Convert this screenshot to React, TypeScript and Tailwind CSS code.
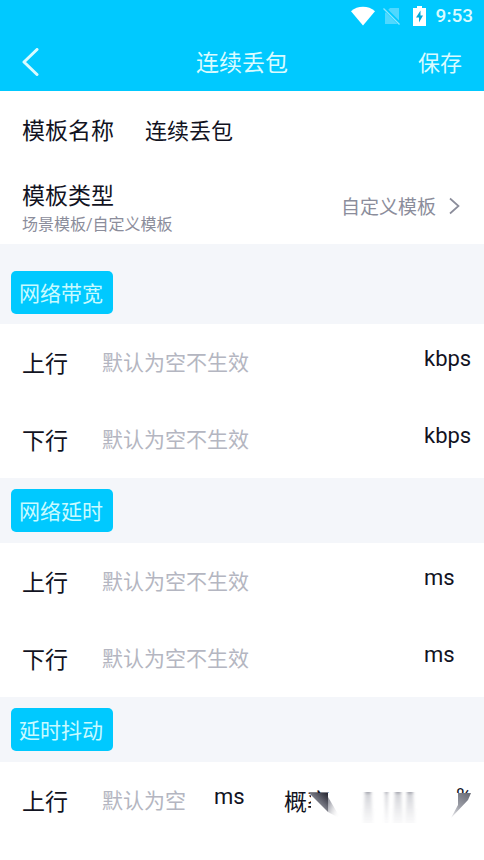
import { useState } from 'react';

interface SectionProps {
  title: string;
  first?: boolean;
  children: React.ReactNode;
}

export default function App() {
  const [name, setName] = useState('连续丢包');

  return (
    <div className="min-h-screen bg-white font-[Roboto,'Noto_Sans_CJK_SC',sans-serif] text-[#12131f]">
      <header className="bg-[#00c9ff] text-[#d9fbff]">
        <StatusBar />
        <div className="grid h-[59px] grid-cols-3 items-center px-[22px]">
          <button type="button" aria-label="返回" className="justify-self-start">
            <svg width="17" height="28" viewBox="0 0 17 28" fill="none" stroke="currentColor" strokeWidth="3">
              <path d="M15 1.5 2 14l13 12.5" strokeLinecap="round" strokeLinejoin="round" />
            </svg>
          </button>
          <h1 className="pt-1 text-center text-[23px] leading-8">连续丢包</h1>
          <button type="button" className="justify-self-end pt-1 text-[22px] leading-8">保存</button>
        </div>
      </header>

      <main>
        <div className="flex h-[77px] items-center px-[22px] pt-1">
          <label htmlFor="name" className="w-[123px] shrink-0 text-[23px] leading-8">模板名称</label>
          <input
            id="name"
            value={name}
            onChange={(e) => setName(e.target.value)}
            className="h-8 min-w-0 flex-1 text-[22px] text-[#12131f] outline-none"
          />
        </div>

        <button type="button" className="flex h-[76px] w-full items-center justify-between pr-6 pl-[22px] text-left">
          <span className="flex flex-col pt-[5px]">
            <span className="text-[23px] leading-8">模板类型</span>
            <span className="text-[16px] leading-6 text-[#8b8d9b]">场景模板/自定义模板</span>
          </span>
          <span className="flex items-center gap-[13px] text-[#8b8d9b]">
            <span className="pt-1 text-[19px] leading-7">自定义模板</span>
            <svg width="11" height="18" viewBox="0 0 11 18" fill="none" stroke="currentColor" strokeWidth="1.7">
              <path d="m1 1.5 8.5 7.5L1 16.5" />
            </svg>
          </span>
        </button>

        <Section title="网络带宽" first>
          <Row id="bandwidth-up" label="上行" unit="kbps" />
          <Row id="bandwidth-down" label="下行" unit="kbps" />
        </Section>

        <Section title="网络延时">
          <Row id="delay-up" label="上行" unit="ms" />
          <Row id="delay-down" label="下行" unit="ms" />
        </Section>

        <Section title="延时抖动">
          <JitterRow />
        </Section>
      </main>
    </div>
  );
}

function StatusBar() {
  return (
    <div className="flex h-8 items-center justify-end pr-[11px]">
      <svg width="24" height="20" viewBox="0 0 24 20" fill="#fff" className="mr-2">
        <path d="M0 5.2C3.4 2.3 7.5.8 12 .8s8.6 1.5 12 4.4L12 19.5Z" />
      </svg>
      <svg width="18" height="20" viewBox="0 0 18 20" className="mr-3">
        <path d="M7 2h9v16H2V7Z" fill="#4fd8ff" />
        <path d="m1 2 16 16" stroke="#00c9ff" strokeWidth="3.5" />
        <path d="m.5 2.5 16 16" stroke="#8ae6ff" strokeWidth="1.3" />
      </svg>
      <svg width="13" height="20" viewBox="0 0 13 20" className="mr-[10px]">
        <path d="M4 0h5v2h4v18H0V2h4Z" fill="#fff" />
        <path d="M7.5 4.5 3 11.5h3v5l4-7H7.5Z" fill="#00a9da" />
      </svg>
      <span className="text-[19px] leading-6 font-medium">9:53</span>
    </div>
  );
}

function Section({ title, first, children }: SectionProps) {
  return (
    <section>
      <div className={`bg-[#f4f6fa] px-[11px] ${first ? 'pt-[27px] pb-[10px]' : 'pt-[11px] pb-[11px]'}`}>
        <h2 className="inline-block rounded-[5px] bg-[#00c9ff] pt-1 pr-[10px] pl-2 align-top text-[21px] leading-[39px] text-[#c8faff]">
          {title}
        </h2>
      </div>
      {children}
    </section>
  );
}

interface RowProps {
  id: string;
  label: string;
  unit: string;
}

function Row({ id, label, unit }: RowProps) {
  return (
    <div className="flex h-[77px] items-center pl-[22px]">
      <label htmlFor={id} className="w-20 shrink-0 pt-1 text-[23px] leading-8">{label}</label>
      <input
        id={id}
        placeholder="默认为空不生效"
        className="h-8 min-w-0 flex-1 text-[21px] outline-none placeholder:text-[#b4b6c1]"
      />
      <span className="w-[60px] shrink-0 pb-2 text-[22px] leading-8">{unit}</span>
    </div>
  );
}

function JitterRow() {
  return (
    <div className="relative flex h-[77px] items-center pr-3 pl-[22px]">
      <label htmlFor="jitter" className="w-20 shrink-0 pt-1 text-[23px] leading-8">上行</label>
      <input
        id="jitter"
        placeholder="默认为空"
        className="h-8 w-[112px] shrink-0 text-[21px] outline-none placeholder:text-[#b4b6c1]"
      />
      <span className="w-[70px] shrink-0 pb-2 text-[22px] leading-8">ms</span>
      <label htmlFor="probability" className="w-20 shrink-0 pt-1 text-[23px] leading-8">概率</label>
      <input id="probability" className="h-8 min-w-0 flex-1 text-[21px] outline-none" />
      <span className="shrink-0 pb-2 text-[22px] leading-8">%</span>
      <FadeMask />
    </div>
  );
}

// soft white patch with streaks over the right end of the row
function FadeMask() {
  return (
    <svg width="180" height="47" viewBox="304 792 180 47" className="pointer-events-none absolute right-0 bottom-0">
      <defs>
        <linearGradient id="streak" x1="0" y1="0" x2="0" y2="1">
          <stop offset="0" stopColor="#777985" stopOpacity="0.65" />
          <stop offset="0.12" stopColor="#a9abb4" stopOpacity="0.5" />
          <stop offset="1" stopColor="#d5d6db" stopOpacity="0.15" />
        </linearGradient>
        <linearGradient id="left" gradientUnits="userSpaceOnUse" x1="312" y1="810" x2="328" y2="793">
          <stop offset="0" stopColor="#b5b6bd" />
          <stop offset="0.5" stopColor="#70717c" />
          <stop offset="1" stopColor="#22232f" />
        </linearGradient>
        <linearGradient id="tail" gradientUnits="userSpaceOnUse" x1="327" y1="806" x2="341" y2="812">
          <stop offset="0" stopColor="#9c9da6" />
          <stop offset="1" stopColor="#fff" stopOpacity="0" />
        </linearGradient>
        <linearGradient id="right" gradientUnits="userSpaceOnUse" x1="468" y1="794" x2="451" y2="818">
          <stop offset="0" stopColor="#6d6f7a" />
          <stop offset="0.5" stopColor="#9a9ca5" />
          <stop offset="1" stopColor="#f0f0f2" />
        </linearGradient>
        <filter id="soft">
          <feGaussianBlur stdDeviation="1.5 0" />
        </filter>
        <filter id="edge">
          <feGaussianBlur stdDeviation="0.4" />
        </filter>
      </defs>
      <path d="M313 793h171v46H326Z" fill="#fff" />
      <path d="M311 793h173v46H311v-37Z" fill="#fff" />
      <path d="M328 797v15l13 7Z" fill="url(#tail)" filter="url(#edge)" />
      <path d="M309 793h19v19Z" fill="url(#left)" filter="url(#edge)" />
      <g fill="url(#streak)" filter="url(#soft)">
        <path d="M365 792h6l2 31h-10Z" />
        <path d="M385 792h3v31h-3Z" />
        <path d="M395 792h6l2 31h-10Z" />
        <path d="M407 792h6l2 31h-10Z" />
      </g>
      <path d="M458 793h13l-3 7-17 18 7-13Z" fill="url(#right)" filter="url(#edge)" />
    </svg>
  );
}
